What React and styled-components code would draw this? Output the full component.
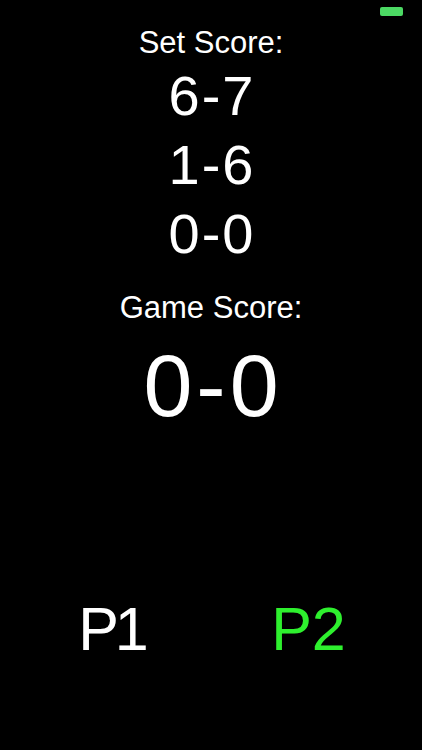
import React from 'react';
import styled, { createGlobalStyle } from 'styled-components';

const Global = createGlobalStyle`
  html, body {
    margin: 0;
    padding: 0;
    background: #000;
  }
  body {
    font-family: "Liberation Sans", Arial, sans-serif;
  }
`

const Screen = styled.div`
  width: 422px;
  height: 750px;
  background: #000;
  color: #fff;
  display: flex;
  flex-direction: column;
  align-items: center;
`

const StatusBar = styled.div`
  align-self: stretch;
  height: 25px;
  display: flex;
  justify-content: flex-end;
  padding: 7px 19px 0 0;
  box-sizing: border-box;
`

const Battery = styled.div`
  width: 23px;
  height: 9px;
  border-radius: 2px;
  background: #4cd964;
`

const Label = styled.div`
  font-size: 31px;
  line-height: 36px;
  margin-top: ${p => p.gap || 0}px;
`

// letter-spacing widens the hyphen gaps, padding-left keeps it centred
const SetLine = styled.div`
  font-size: 56px;
  line-height: 69px;
  letter-spacing: 2px;
  padding-left: 2px;
`

const GameLine = styled.div`
  font-size: 88px;
  line-height: 100px;
  margin-top: 10px;
  letter-spacing: 4px;
  padding-left: 4px;
`

const Players = styled.div`
  align-self: stretch;
  display: grid;
  grid-template-columns: 1fr 1fr;
  padding: 0 16px;
  margin-top: 158px;
`

const Player = styled.div`
  text-align: center;
  font-size: 61px;
  line-height: 70px;
  letter-spacing: ${p => p.active ? 0 : -4}px;
  padding-right: ${p => p.active ? 0 : 4}px;
  color: ${p => p.active ? '#2ef02e' : '#fff'};
`

function App() {
  const sets = ['6-7', '1-6', '0-0']

  return (
    <Screen>
      <Global />
      <StatusBar>
        <Battery />
      </StatusBar>
      <Label>Set Score:</Label>
      {sets.map((s, i) => (
        <SetLine key={i}>{s}</SetLine>
      ))}
      <Label gap={22}>Game Score:</Label>
      <GameLine>0-0</GameLine>
      <Players>
        <Player>P1</Player>
        <Player active>P2</Player>
      </Players>
    </Screen>
  );
}

export default App;
